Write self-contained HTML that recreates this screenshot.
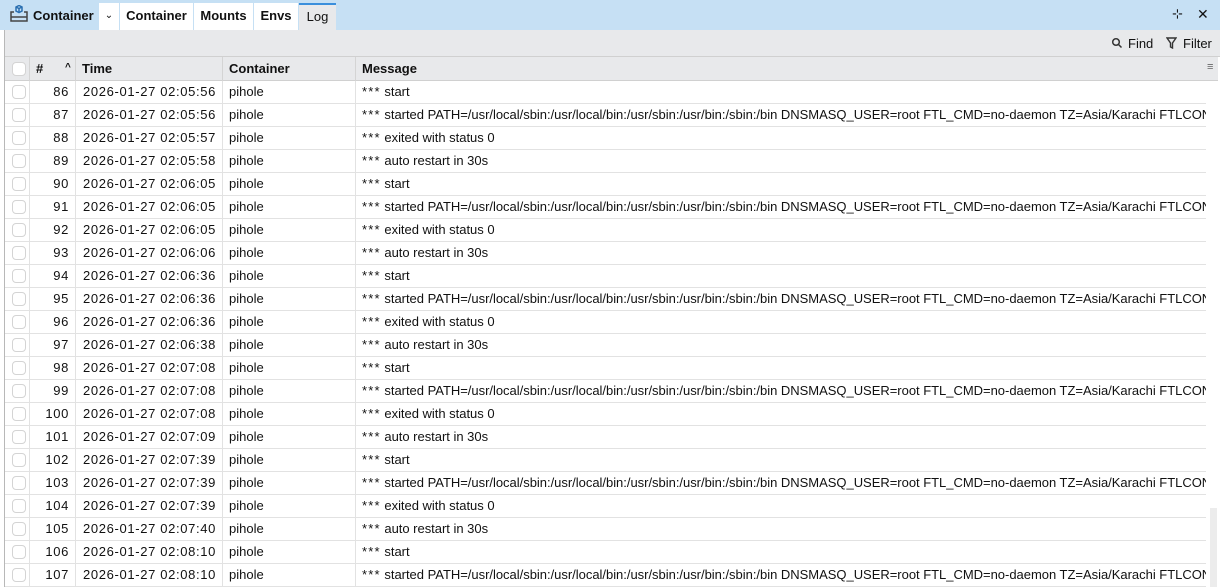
<!DOCTYPE html>
<html><head><meta charset="utf-8"><style>
*{box-sizing:border-box;margin:0;padding:0}
body{width:1220px;height:587px;overflow:hidden;background:#fff;font-family:"Liberation Sans",sans-serif;font-size:13px;color:#111;position:relative}
.top{position:absolute;left:0;top:0;width:1220px;height:30px;background:#c6e0f4}
.title{position:absolute;left:33px;top:8px;font-weight:bold;font-size:13px}
.tab{position:absolute;top:3px;height:27px;background:#fff;line-height:26px;font-weight:bold;font-size:13px;text-align:center}
.lborder{position:absolute;left:4px;top:30px;width:1px;height:557px;background:#b8b8b8}
.tool{position:absolute;left:5px;top:30px;width:1215px;height:27px;background:#e8e9eb;border-bottom:1px solid #d0d0d0}
.hdr{position:absolute;left:5px;top:57px;width:1213px;height:24px;background:#e8e9eb;border-bottom:1px solid #d0d0d0}
.hc{position:absolute;top:0;height:24px;line-height:24px;font-weight:bold;font-size:13px;border-left:1px solid #d4d4d4;padding-left:6px}
.row{position:absolute;left:5px;width:1201px;height:23px;border-bottom:1px solid #e2e2e2;white-space:nowrap;overflow:hidden}
.row span{position:absolute;top:0;line-height:22px;font-size:13px}
.row span b{position:static;font-weight:normal;letter-spacing:1.2px}
.cb{position:absolute;left:7px;top:4px;width:14px;height:14px;border:1px solid #d4d4d4;border-radius:4px;background:#fff}
.vl{position:absolute;top:81px;width:1px;height:506px;background:#e2e2e2}
.sb{position:absolute;left:1207px;top:81px;width:13px;height:506px;background:#fff}
.thumb{position:absolute;left:1210px;top:508px;width:7px;height:79px;background:#ececec}
.t{letter-spacing:0.65px}
.m{letter-spacing:-0.02px}
</style></head><body>
<div class="top"></div>
<svg style="position:absolute;left:10px;top:5px" width="18" height="18" viewBox="0 0 18 18" fill="none" stroke="#2a6fb0" stroke-width="1.5"><path d="M6 2l3-1.5 3 1.5v4l-3 1.5-3-1.5z"/><path d="M6 2l3 1.5 3-1.5M9 3.5v4"/><path d="M4 7H1v9h16V7h-3" stroke="#444"/><path d="M1 12h16" stroke="#444"/></svg>
<div class="title">Container</div>
<div class="tab" style="left:99px;width:20px;font-weight:normal;font-size:10px">⌄</div>
<div class="tab" style="left:120px;width:73px">Container</div>
<div class="tab" style="left:194px;width:59px">Mounts</div>
<div class="tab" style="left:254px;width:44px">Envs</div>
<div class="tab" style="left:299px;width:37px;background:#e8e9eb;border-top:2px solid #3a8fdc;line-height:24px;font-weight:normal">Log</div>
<div style="position:absolute;left:1172px;top:6px;font-size:13px">⊹</div>
<div style="position:absolute;left:1197px;top:6px;font-size:14px">✕</div>
<div class="lborder"></div>
<div class="tool"></div>
<svg style="position:absolute;left:1111px;top:37px" width="12" height="12" viewBox="0 0 12 12" fill="none" stroke="#333" stroke-width="1.5"><circle cx="5" cy="5" r="3.3"/><path d="M7.5 7.5l3 3"/></svg>
<div style="position:absolute;left:1128px;top:36px">Find</div>
<svg style="position:absolute;left:1166px;top:37px" width="11" height="12" viewBox="0 0 11 12" fill="none" stroke="#333" stroke-width="1.4"><path d="M1 1h9L6.5 6v5L4.5 10V6z"/></svg>
<div style="position:absolute;left:1183px;top:36px">Filter</div>
<div class="hdr">
<div class="cb" style="top:5px"></div>
<div class="hc" style="left:24px;width:47px">#<span style="position:absolute;left:35px;font-size:10px;top:-1px">^</span></div>
<div class="hc" style="left:70px">Time</div>
<div class="hc" style="left:217px">Container</div>
<div class="hc" style="left:350px">Message</div>
<div style="position:absolute;left:1202px;top:4px;font-size:11px;color:#666">≡</div>
</div>
<div id="rows"></div>
<div class="vl" style="left:29px"></div><div class="vl" style="left:75px"></div><div class="vl" style="left:222px"></div><div class="vl" style="left:355px"></div>
<div class="sb"></div><div class="thumb"></div>
<script>
var d=[["86","02:05:56",0],["87","02:05:56",1],["88","02:05:57",2],["89","02:05:58",3],["90","02:06:05",0],["91","02:06:05",1],["92","02:06:05",2],["93","02:06:06",3],["94","02:06:36",0],["95","02:06:36",1],["96","02:06:36",2],["97","02:06:38",3],["98","02:07:08",0],["99","02:07:08",1],["100","02:07:08",2],["101","02:07:09",3],["102","02:07:39",0],["103","02:07:39",1],["104","02:07:39",2],["105","02:07:40",3],["106","02:08:10",0],["107","02:08:10",1]];
var m=["start","started PATH=/usr/local/sbin:/usr/local/bin:/usr/sbin:/usr/bin:/sbin:/bin DNSMASQ_USER=root FTL_CMD=no-daemon TZ=Asia/Karachi FTLCONF_webserver_api_password=","exited with status 0","auto restart in 30s"];
var h="";d.forEach(function(r,i){h+='<div class="row" style="top:'+(81+i*23)+'px"><div class="cb"></div><span class="t" style="left:24px;width:40px;text-align:right">'+r[0]+'</span><span class="t" style="left:78px">2026-01-27 '+r[1]+'</span><span style="left:224px">pihole</span><span class="m" style="left:357px"><b>***</b> '+m[r[2]]+'</span></div>'});
document.getElementById("rows").innerHTML=h;
</script>
</body></html>
